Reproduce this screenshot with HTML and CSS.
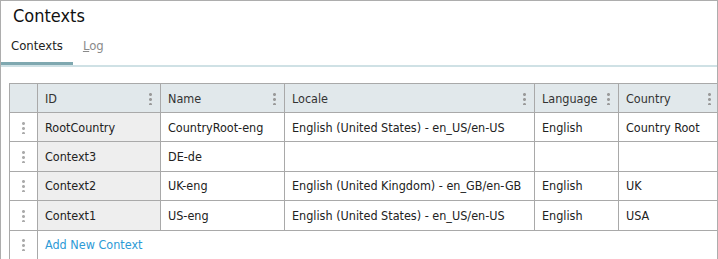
FILE: index.html
```html
<!DOCTYPE html>
<html>
<head>
<meta charset="utf-8">
<link rel="stylesheet" href="styles.css">
</head>
<body>
<div class="panel">
  <h1 class="title">Contexts</h1>
  <div class="tabs">
    <div class="tab active">Contexts</div>
    <div class="tab"><u>L</u>og</div>
  </div>
  <div class="grid-wrap">
    <table class="grid">
      <colgroup>
        <col class="c-handle"><col class="c-id"><col class="c-name"><col class="c-locale"><col class="c-lang"><col class="c-country">
      </colgroup>
      <thead>
        <tr>
          <th class="handle"></th>
          <th><div class="hcell"><span>ID</span><i class="menu"></i></div></th>
          <th><div class="hcell"><span>Name</span><i class="menu"></i></div></th>
          <th><div class="hcell"><span>Locale</span><i class="menu"></i></div></th>
          <th><div class="hcell"><span>Language</span><i class="menu"></i></div></th>
          <th><div class="hcell"><span>Country</span><i class="menu"></i></div></th>
        </tr>
      </thead>
      <tbody>
        <tr><td class="handle"><i class="grip"></i></td><td class="id">RootCountry</td><td>CountryRoot-eng</td><td>English (United States) - en_US/en-US</td><td>English</td><td>Country Root</td></tr>
        <tr><td class="handle"><i class="grip"></i></td><td class="id">Context3</td><td>DE-de</td><td></td><td></td><td></td></tr>
        <tr><td class="handle"><i class="grip"></i></td><td class="id">Context2</td><td>UK-eng</td><td>English (United Kingdom) - en_GB/en-GB</td><td>English</td><td>UK</td></tr>
        <tr><td class="handle"><i class="grip"></i></td><td class="id">Context1</td><td>US-eng</td><td>English (United States) - en_US/en-US</td><td>English</td><td>USA</td></tr>
        <tr class="add"><td class="handle"><i class="grip"></i></td><td colspan="5"><a class="add-link">Add New Context</a></td></tr>
      </tbody>
    </table>
  </div>
</div>
</body>
</html>
```
FILE: styles.css
```css
* { box-sizing: border-box; }
html, body { margin: 0; padding: 0; background: #fff; }
body { font-family: "DejaVu Sans Condensed", "DejaVu Sans", sans-serif; color: #222; }

.panel {
  width: 718px;
  height: 259px;
  border: 1px solid #adadad;
  border-bottom: none;
  overflow: hidden;
}

.title {
  margin: 0;
  padding: 4px 12px 0;
  height: 34px;
  font-size: 18px;
  font-weight: normal;
  line-height: 21px;
  color: #111;
}

.tabs {
  display: flex;
  border-bottom: 2px solid #cfe1e5;
  height: 32px;
}
.tab {
  padding: 3px 10px 0;
  font-size: 13px;
  line-height: 16px;
  color: #8a8a8a;
  height: 30px;
}
.tab.active {
  color: #222;
  border-bottom: 3px solid #7fa8b0;
}
.tab u { text-decoration: underline; }

.grid-wrap {
  padding: 16px 0 0 8px;
}
.grid {
  border-collapse: collapse;
  table-layout: fixed;
  width: 710px;
  font-size: 12.5px;
}
.c-handle { width: 28px; }
.c-id { width: 123px; }
.c-name { width: 124px; }
.c-locale { width: 250px; }
.c-lang { width: 84px; }
.c-country { width: 101px; }

.grid th, .grid td {
  border: 1px solid #a9a9a9;
  height: 29.4px;
  padding: 0 7px;
  text-align: left;
  white-space: nowrap;
  overflow: hidden;
}
.grid th {
  background: #e1e8eb;
  font-weight: normal;
  color: #333;
  height: 29px;
}
.grid td { color: #222; }
.grid td.id { background: #eeeeee; }

.hcell {
  display: flex;
  align-items: center;
  justify-content: space-between;
}
.menu, .grip {
  display: block;
  width: 3px;
  height: 13px;
  background: radial-gradient(circle, #9a9a9a 1.2px, transparent 1.7px) 0 0 / 3px 5px repeat-y;
}
.menu { margin-right: 1px; }
.grid td.handle { padding: 0; }
.grip {
  margin: 0 auto;
  background: radial-gradient(circle, #ababab 1.2px, transparent 1.7px) 0 0 / 3px 5px repeat-y;
}

.add-link { color: #2d9ad6; cursor: pointer; }
```
